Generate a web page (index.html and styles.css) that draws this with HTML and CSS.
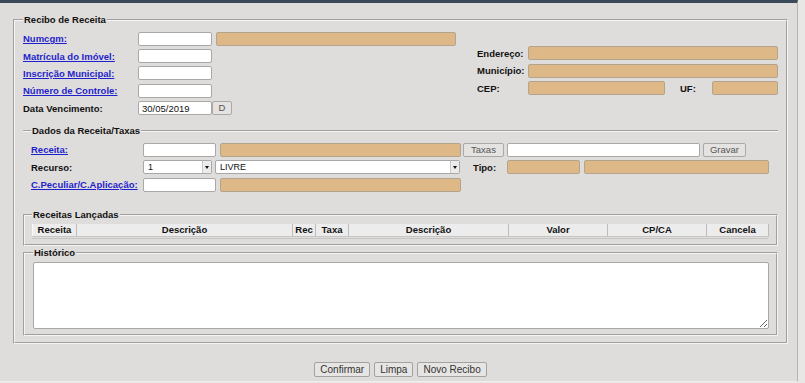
FILE: index.html
```html
<!DOCTYPE html>
<html lang="pt-BR">
<head>
    <meta charset="UTF-8">
    <title>Recibo de Receita</title>
    <link rel="stylesheet" href="styles.css">
</head>
<body>
    <div class="page">
        <fieldset class="box main">
            <legend>Recibo de Receita</legend>

            <div class="top">
                <div class="col-left">
                    <div class="row">
                        <a class="lbl link" href="#">Numcgm:</a>
                        <input class="txt w74" type="text">
                        <input class="txt ro w240 ml4" type="text" readonly>
                    </div>
                    <div class="row">
                        <a class="lbl link" href="#">Matrícula do Imóvel:</a>
                        <input class="txt w74" type="text">
                    </div>
                    <div class="row">
                        <a class="lbl link" href="#">Inscrição Municipal:</a>
                        <input class="txt w74" type="text">
                    </div>
                    <div class="row">
                        <a class="lbl link" href="#">Número de Controle:</a>
                        <input class="txt w74" type="text">
                    </div>
                    <div class="row">
                        <span class="lbl">Data Vencimento:</span>
                        <input class="txt w74" type="text" value="30/05/2019">
                        <button class="btn btn-d ml4" type="button">D</button>
                    </div>
                </div>

                <div class="col-right">
                    <div class="row">
                        <span class="lbl lbl-r">Endereço:</span>
                        <input class="txt ro w250" type="text" readonly>
                    </div>
                    <div class="row">
                        <span class="lbl lbl-r">Município:</span>
                        <input class="txt ro w250" type="text" readonly>
                    </div>
                    <div class="row">
                        <span class="lbl lbl-r">CEP:</span>
                        <input class="txt ro w137" type="text" readonly>
                        <span class="lbl lbl-uf">UF:</span>
                        <input class="txt ro w66" type="text" readonly>
                    </div>
                </div>
            </div>

            <fieldset class="box dados">
                <legend>Dados da Receita/Taxas</legend>
                <div class="row row-d">
                    <a class="lbl lbl-d link" href="#">Receita:</a>
                    <input class="txt w73" type="text">
                    <input class="txt ro w241 ml4" type="text" readonly>
                    <button class="btn btn-taxas" type="button">Taxas</button>
                    <input class="txt w193 ml3" type="text">
                    <button class="btn btn-gravar" type="button">Gravar</button>
                </div>
                <div class="row row-d">
                    <span class="lbl lbl-d">Recurso:</span>
                    <div class="sel w69"><span class="sel-val">1</span><i class="arr"></i></div>
                    <div class="sel w245 ml3"><span class="sel-val">LIVRE</span><i class="arr"></i></div>
                    <span class="lbl lbl-tipo">Tipo:</span>
                    <input class="txt ro w73" type="text" readonly>
                    <input class="txt ro w185 ml4" type="text" readonly>
                </div>
                <div class="row row-d">
                    <a class="lbl lbl-d link" href="#">C.Peculiar/C.Aplicação:</a>
                    <input class="txt w73" type="text">
                    <input class="txt ro w241 ml4" type="text" readonly>
                </div>
            </fieldset>

            <fieldset class="box inner lancadas">
                <legend>Receitas Lançadas</legend>
                <div class="grid-wrap">
                    <table class="grid">
                        <colgroup>
                            <col style="width:44px">
                            <col style="width:216px">
                            <col style="width:23px">
                            <col style="width:33px">
                            <col style="width:160px">
                            <col style="width:99px">
                            <col style="width:99px">
                            <col style="width:62px">
                        </colgroup>
                        <tr>
                            <th>Receita</th>
                            <th>Descrição</th>
                            <th>Rec</th>
                            <th>Taxa</th>
                            <th>Descrição</th>
                            <th>Valor</th>
                            <th>CP/CA</th>
                            <th>Cancela</th>
                        </tr>
                    </table>
                </div>
            </fieldset>

            <fieldset class="box inner hist">
                <legend>Histórico</legend>
                <textarea class="obs"></textarea>
            </fieldset>
        </fieldset>

        <div class="actions">
            <button class="btn-main" type="button">Confirmar</button>
            <button class="btn-main" type="button">Limpa</button>
            <button class="btn-main" type="button">Novo Recibo</button>
        </div>
    </div>
</body>
</html>
```

FILE: styles.css
```css
* {
    box-sizing: border-box;
}

body {
    margin: 0;
    background: #e8e7e5;
    font-family: "Liberation Sans", Arial, sans-serif;
    font-size: 9.5px;
    color: #111;
}

.page {
    width: 798px;
    height: 382px;
    background: #dfdddb;
    border-top: 3px solid #3b4a59;
    border-right: 1px solid #b5b4b2;
    border-bottom: 1px solid #efeeec;
    padding: 11px 0 0 13px;
}

/* fieldsets */
fieldset.box {
    margin: 0;
    border: 2px groove #f4f4f4;
    min-width: 0;
}

legend {
    font-weight: bold;
    line-height: 12px;
    padding: 0 1px;
}

.main {
    width: 775px;
    padding: 4px 8px 6px 8px;
}

.inner {
    padding: 3px 8px 5px 8px;
}

.dados {
    border-left: none !important;
    border-right: none !important;
    border-bottom: none !important;
    margin-top: 8px !important;
    padding: 4px 0 15.5px 8px;
}

.lancadas {
    padding-left: 7px;
}

.hist {
    margin-top: 1px !important;
    padding-right: 7px;
}

/* rows */
.top {
    display: flex;
}

.col-left {
    width: 454px;
}

.col-right {
    margin-top: 14.3px;
}

.row {
    display: flex;
    align-items: center;
    height: 17.4px;
}

.col-right .row,
.row-d {
    height: 17.5px;
}

.lbl {
    width: 115px;
    font-weight: bold;
    white-space: nowrap;
    flex: none;
}

.lbl-r {
    width: 51px;
}

.lbl-uf {
    width: 32px;
    margin-left: 15px;
}

.lbl-d {
    width: 112px;
}

.lbl-tipo {
    width: 34px;
    margin-left: 13px;
}

.link {
    color: #1f1fcc;
    text-decoration: underline;
}

/* inputs */
.txt {
    height: 14px;
    margin: 0;
    padding: 0 3px;
    border: 1px solid #a9a8a6;
    border-radius: 2px;
    background: #fff;
    font-family: inherit;
    font-size: 9.5px;
    color: #111;
    flex: none;
}

.txt.ro {
    background: #deb887;
    border-color: #b3a48e;
}

.w66 { width: 66px; }
.w69 { width: 69px; }
.w73 { width: 73px; }
.w74 { width: 74px; }
.w137 { width: 137px; }
.w185 { width: 185px; }
.w193 { width: 193px; }
.w240 { width: 240px; }
.w241 { width: 241px; }
.w245 { width: 245px; }
.w250 { width: 250px; }

.ml3 { margin-left: 3px; }
.ml4 { margin-left: 4px; }

/* fake select */
.sel {
    display: flex;
    align-items: center;
    height: 14px;
    border: 1px solid #a9a8a6;
    border-radius: 2px;
    background: #fff;
    padding-left: 4px;
    flex: none;
}

.sel-val {
    flex: 1;
    font-size: 9px;
}

.arr {
    width: 9px;
    height: 12px;
    background: #ebebeb;
    border-left: 1px solid #c9c9c9;
    display: flex;
    align-items: center;
    justify-content: center;
}

.arr::after {
    content: "";
    border-left: 2.5px solid transparent;
    border-right: 2.5px solid transparent;
    border-top: 3px solid #111;
}

/* buttons */
.btn {
    height: 14px;
    margin: 0;
    padding: 0;
    border: 1px solid #aaa9a7;
    border-radius: 2px;
    background: #e4e3e1;
    color: #555;
    font-family: inherit;
    font-size: 9.5px;
    line-height: 12px;
    flex: none;
}

.btn-d {
    width: 20px;
}

.btn-taxas {
    width: 41px;
    margin-left: 2px;
}

.btn-gravar {
    width: 43px;
    margin-left: 3px;
}

/* table */
.grid-wrap {
    border-bottom: 1px solid #c6c5c3;
    padding-bottom: 1px;
}

.grid {
    width: 736px;
    table-layout: fixed;
    border-collapse: collapse;
}

.grid th {
    height: 13px;
    padding: 0;
    background: #ececec;
    border-left: 1px solid #fafafa;
    border-right: 1px solid #bdbcba;
    border-bottom: 1px solid #c6c5c3;
    font-weight: bold;
    font-size: 9.5px;
    text-align: center;
    line-height: 12px;
}

.obs {
    display: block;
    width: 736px;
    height: 67px;
    margin: 0;
    border: 1px solid #a9a8a6;
    border-radius: 2px;
    background: #fff;
}

/* bottom */
.actions {
    width: 775px;
    margin-top: 18px;
    display: flex;
    justify-content: center;
    gap: 4px;
}

.btn-main {
    height: 15px;
    margin: 0;
    padding: 0 5px;
    border: 1px solid #a3a2a0;
    border-radius: 2px;
    background: #e6e5e3;
    color: #333;
    font-family: "Liberation Sans", Arial, sans-serif;
    font-size: 10px;
    line-height: 13px;
}
```
